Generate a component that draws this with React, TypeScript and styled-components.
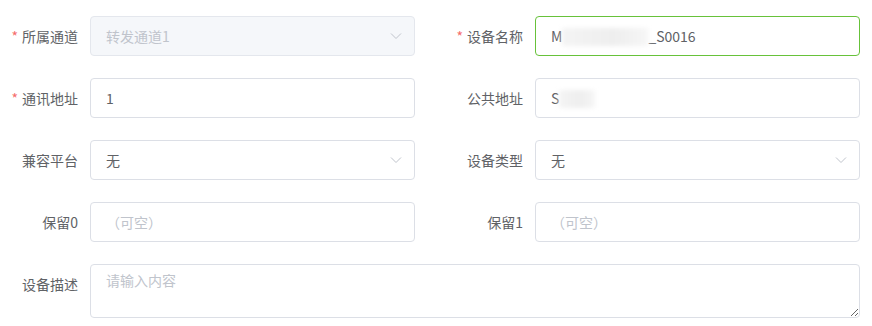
import React from "react";
import styled, { createGlobalStyle, css } from "styled-components";

const COLORS = {
  text: "#606266",
  placeholder: "#c0c4cc",
  border: "#dcdfe6",
  disabledBg: "#f5f7fa",
  disabledBorder: "#e4e7ed",
  focus: "#67c23a",
  danger: "#f56c6c",
};

const GlobalStyle = createGlobalStyle`
  html, body {
    margin: 0;
    padding: 0;
    background: #fff;
  }
  body {
    font-family: "Microsoft YaHei", "Noto Sans CJK SC", "Noto Sans", sans-serif;
    font-size: 14px;
    color: ${COLORS.text};
  }
`;

const Form = styled.div`
  display: grid;
  grid-template-columns: 415px 415px;
  column-gap: 30px;
  row-gap: 22px;
  padding-top: 16px;
  width: 860px;
`;

const FormItem = styled.div<{ $wide?: boolean }>`
  display: flex;
  align-items: ${({ $wide }) => ($wide ? "flex-start" : "center")};
  ${({ $wide }) =>
    $wide &&
    css`
      grid-column: 1 / span 2;
    `}
`;

const Label = styled.label`
  width: 90px;
  flex: none;
  box-sizing: border-box;
  padding-right: 12px;
  text-align: right;
  line-height: 40px;
  color: ${COLORS.text};
  white-space: nowrap;
`;

const Star = styled.span`
  color: ${COLORS.danger};
  margin-right: 4px;
`;

const Box = styled.div<{ $disabled?: boolean; $focused?: boolean }>`
  flex: 1;
  height: 40px;
  box-sizing: border-box;
  display: flex;
  align-items: center;
  padding: 0 15px;
  border: 1px solid ${COLORS.border};
  border-radius: 4px;
  background: #fff;
  ${({ $disabled }) =>
    $disabled &&
    css`
      background: ${COLORS.disabledBg};
      border-color: ${COLORS.disabledBorder};
    `}
  ${({ $focused }) =>
    $focused &&
    css`
      border-color: ${COLORS.focus};
    `}
`;

const BoxText = styled.span<{ $muted?: boolean }>`
  flex: 1;
  display: flex;
  align-items: center;
  white-space: nowrap;
  color: ${({ $muted }) => ($muted ? COLORS.placeholder : COLORS.text)};
`;

// redacted part of a value, as it appears blurred in the screenshot
const Smudge = styled.span<{ $w: number }>`
  display: inline-block;
  width: ${({ $w }) => $w}px;
  height: 18px;
  margin-top: 2px;
  background: linear-gradient(90deg, #f4f4f4, #eeeeee 60%, #f6f6f6);
  filter: blur(2px);
`;

const Chevron = styled.svg`
  flex: none;
  margin-right: -3px;
`;

const TextArea = styled.textarea`
  flex: 1;
  height: 54px;
  box-sizing: border-box;
  padding: 5px 15px;
  border: 1px solid ${COLORS.border};
  border-radius: 4px;
  font-family: inherit;
  font-size: 14px;
  line-height: 1.5;
  color: ${COLORS.text};
  resize: vertical;
  outline: none;
  &::placeholder {
    color: ${COLORS.placeholder};
  }
`;

type Field = {
  label: string;
  required?: boolean;
  kind: "input" | "select";
  value?: React.ReactNode;
  placeholder?: string;
  disabled?: boolean;
  focused?: boolean;
};

const fields: Field[] = [
  { label: "所属通道", required: true, kind: "select", value: "转发通道1", disabled: true },
  {
    label: "设备名称",
    required: true,
    kind: "input",
    focused: true,
    value: (
      <>
        M<Smudge $w={86} />_S0016
      </>
    ),
  },
  { label: "通讯地址", required: true, kind: "input", value: "1" },
  {
    label: "公共地址",
    kind: "input",
    value: (
      <>
        S<Smudge $w={36} />
      </>
    ),
  },
  { label: "兼容平台", kind: "select", value: "无" },
  { label: "设备类型", kind: "select", value: "无" },
  { label: "保留0", kind: "input", placeholder: "（可空）" },
  { label: "保留1", kind: "input", placeholder: "（可空）" },
];

export default function App() {
  return (
    <>
      <GlobalStyle />
      <Form>
        {fields.map((f) => (
          <FormItem key={f.label}>
            <Label>
              {f.required && <Star>*</Star>}
              {f.label}
            </Label>
            <Box $disabled={f.disabled} $focused={f.focused}>
              <BoxText $muted={f.disabled || !f.value}>
                {f.value ?? f.placeholder}
              </BoxText>
              {f.kind === "select" && (
                <Chevron viewBox="0 0 12 8" width="12" height="8">
                  <path d="M1 1.5 L6 6.5 L11 1.5" fill="none" stroke={COLORS.placeholder} strokeWidth="1" />
                </Chevron>
              )}
            </Box>
          </FormItem>
        ))}
        <FormItem $wide>
          <Label>设备描述</Label>
          <TextArea placeholder="请输入内容" />
        </FormItem>
      </Form>
    </>
  );
}
